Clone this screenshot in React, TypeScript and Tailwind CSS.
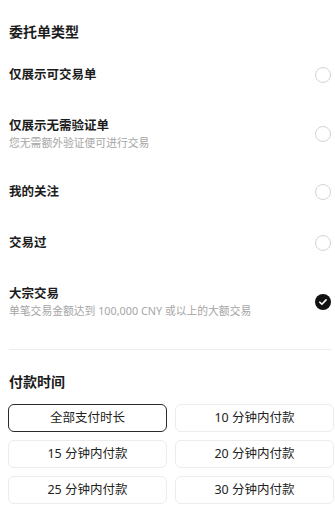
import React, { useState } from 'react';

const FONT = { fontFamily: '"Noto Sans", "Noto Sans CJK SC", sans-serif' };

type Row = { title: string; sub?: string; h: string };

const rows: Row[] = [
  { title: '仅展示可交易单', h: 'h-[52px]' },
  { title: '仅展示无需验证单', sub: '您无需额外验证便可进行交易', h: 'h-[66px]' },
  { title: '我的关注', h: 'h-[50px]' },
  { title: '交易过', h: 'h-[51px]' },
  { title: '大宗交易', sub: '单笔交易金额达到 100,000 CNY 或以上的大额交易', h: 'h-[68px]' },
];

const payTimes = ['全部支付时长', '10 分钟内付款', '15 分钟内付款', '20 分钟内付款', '25 分钟内付款', '30 分钟内付款'];

const Radio = ({ checked }: { checked: boolean }) =>
  checked ? (
    <svg width="16" height="16" viewBox="0 0 16 16">
      <circle cx="8" cy="8" r="8" fill="#111" />
      <path d="M4.8 8.2l2.1 2.1 4.2-4.4" fill="none" stroke="#fff" strokeWidth="1.6" strokeLinecap="round" strokeLinejoin="round" />
    </svg>
  ) : (
    <div className="w-4 h-4 rounded-full border border-[#d4d4d4]" />
  );

export default function App() {
  const [checked, setChecked] = useState<number[]>([4]);
  const [pay, setPay] = useState(0);

  const toggle = (i: number) =>
    setChecked((c) => (c.includes(i) ? c.filter((x) => x !== i) : [...c, i]));

  return (
    <div className="w-[335px] h-[527px] bg-white text-[#1c1c1c] overflow-hidden" style={FONT}>
      <div className="pt-[22px] pl-[9px] pr-1">
        <div className="h-5 leading-5 text-[14px] font-bold">委托单类型</div>

        <div className="mt-[7px]">
          {rows.map((r, i) => (
            <div
              key={r.title}
              onClick={() => toggle(i)}
              className={`${r.h} flex items-center justify-between cursor-pointer`}
            >
              <div className="flex flex-col">
                <span className="text-[12.5px] leading-[18px] font-semibold">{r.title}</span>
                {r.sub && (
                  <span className="text-[10.8px] leading-4 text-[#a6a6a6]">{r.sub}</span>
                )}
              </div>
              <Radio checked={checked.includes(i)} />
            </div>
          ))}
        </div>

        <div className="mt-[13px] h-px bg-[#ededed]" />

        <div className="mt-[22px] h-5 leading-5 text-[14px] font-bold">付款时间</div>
      </div>

      {/* 付款时间选项 */}
      <div className="mt-3 pl-2 pr-px grid grid-cols-2 gap-x-2 gap-y-2">
        {payTimes.map((t, i) => (
          <button
            key={t}
            onClick={() => setPay(i)}
            className={`h-[28px] rounded-md text-[12.5px] text-[#222] flex items-center justify-center border ${
              pay === i ? 'border-[#2a2a2a]' : 'border-[#ececec]'
            }`}
          >
            {t}
          </button>
        ))}
      </div>
    </div>
  );
}
